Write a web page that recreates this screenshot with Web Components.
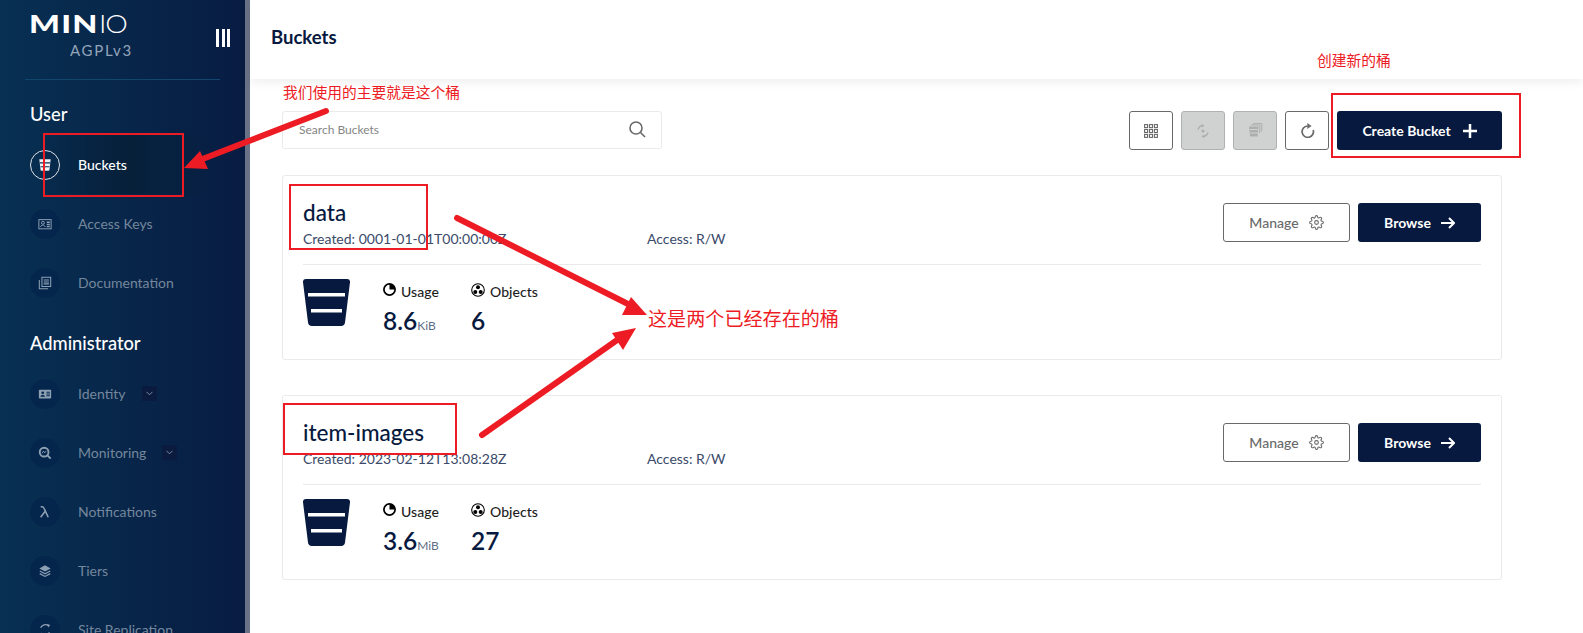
<!DOCTYPE html>
<html lang="zh">
<head>
<meta charset="utf-8">
<title>MinIO Buckets</title>
<style>
  html, body { margin: 0; height: 633px; overflow: hidden; background: #fff; }
  body { font-family: Lato, "Noto Sans CJK SC", sans-serif; color: #07193e; display: flex; position: relative; }
</style>
</head>
<body>
  <minio-sidebar>
    <nav-group label="User" first>
      <nav-item icon="bucket" active>Buckets</nav-item>
      <nav-item icon="keys">Access Keys</nav-item>
      <nav-item icon="docs">Documentation</nav-item>
    </nav-group>
    <nav-group label="Administrator">
      <nav-item icon="identity" caret>Identity</nav-item>
      <nav-item icon="monitor" caret>Monitoring</nav-item>
      <nav-item icon="lambda">Notifications</nav-item>
      <nav-item icon="tiers">Tiers</nav-item>
      <nav-item icon="sync">Site Replication</nav-item>
    </nav-group>
  </minio-sidebar>
  <main-area title="Buckets">
    <bucket-toolbar></bucket-toolbar>
    <bucket-card name="data" created="0001-01-01T00:00:00Z" size="8.6" unit="KiB" objects="6"></bucket-card>
    <bucket-card name="item-images" created="2023-02-12T13:08:28Z" size="3.6" unit="MiB" objects="27"></bucket-card>
  </main-area>
  <note-layer></note-layer>

<script>
const ICONS = {
  bucket: '<path fill="currentColor" d="M1.500 1.500h13l-1.400 12a1 1 0 0 1-1 1H3.900a1 1 0 0 1-1-1z"/><path stroke="#0a2f55" stroke-width="1.400" d="M2 5.500h12M3 10h10"/>',
  keys: '<rect x="1" y="3" width="14" height="10.500" fill="none" stroke="currentColor" stroke-width="1.100"/><circle cx="5.600" cy="6.600" r="1.700" fill="none" stroke="currentColor" stroke-width="1.100"/><path fill="none" stroke="currentColor" stroke-width="1.100" d="M3 11.500c0-3 5-3 5 0"/><path stroke="currentColor" stroke-width="1.600" d="M10 6h3.500M10 8.500h3.500M10 11h3.500"/>',
  docs: '<path fill="none" stroke="currentColor" stroke-width="1.200" d="M4.500 1.500h10v10.500h-10zM1.500 4.500v10h10"/><path stroke="currentColor" stroke-width="1.200" d="M6.500 4.500h6M6.500 6.800h6M6.500 9h6"/>',
  identity: '<rect x="1" y="3" width="14" height="10" rx="1" fill="currentColor"/><circle cx="5.400" cy="6.600" r="1.600" fill="#062a50"/><path fill="#062a50" d="M2.800 11.200c0-2.800 5.200-2.800 5.200 0z"/><path stroke="#062a50" stroke-width="1.100" d="M9.600 6h4M9.600 8h4M9.600 10h4"/>',
  monitor: '<circle cx="7" cy="7" r="5" fill="none" stroke="currentColor" stroke-width="2.200"/><path stroke="currentColor" stroke-width="2.200" d="M10.500 10.500l4 4"/><path fill="none" stroke="currentColor" d="M4.600 8.400l1.600-2.600 1.500 2 1.600-2"/>',
  lambda: '<path fill="none" stroke="currentColor" stroke-width="1.800" d="M3 2h1.800c1 0 1.500.5 1.900 1.400l5 10.600M8 7.500l-5 6.500"/>',
  tiers: '<path fill="currentColor" d="M8 1.500l6.500 3.500L8 8.500 1.500 5z"/><path fill="none" stroke="currentColor" stroke-width="1.400" d="M2 8l6 3.200L14 8M2 11l6 3.200 6-3.200"/>',
  sync: '<path fill="none" stroke="currentColor" stroke-width="1.500" d="M3 5.500A6 6 0 0 1 12 3M13 10.500A6 6 0 0 1 4 13"/><path fill="currentColor" d="M10.500 1l3.500 1.200-2.400 3zM5.500 15L2 13.800l2.400-3z"/>'
}

const TOOL_ICONS = {
  grid: '<g fill="none" stroke="currentColor" stroke-width="1.100"><rect x=".6" y=".6" width="3" height="3"/><rect x="5.500" y=".6" width="3" height="3"/><rect x="10.400" y=".6" width="3" height="3"/><rect x=".6" y="5.500" width="3" height="3"/><rect x="5.500" y="5.500" width="3" height="3"/><rect x="10.400" y="5.500" width="3" height="3"/><rect x=".6" y="10.400" width="3" height="3"/><rect x="5.500" y="10.400" width="3" height="3"/><rect x="10.400" y="10.400" width="3" height="3"/></g>',
  rewind: '<path fill="none" stroke="currentColor" stroke-width="1.500" d="M2 5.500A6 6 0 0 1 7 1.500M12 8.500A6 6 0 0 1 7 12.500"/><path fill="currentColor" d="M5.500 0l3 1.500-2.500 2zM8.500 14l-3-1.500 2.500-2z"/><circle cx="7" cy="7" r="1.600" fill="currentColor"/>',
  stack: '<path fill="currentColor" d="M1 3.500h9.500l-.9 10H2z"/><path fill="none" stroke="currentColor" d="M3 2h9l-.4 8M5 .6h9l-.4 8"/><path stroke="#d0d2d2" d="M1.500 6.500h8.500M2 10h8"/>',
  refresh: '<path fill="none" stroke="currentColor" stroke-width="1.600" d="M12.300 6.500A5.300 5.300 0 1 1 7 2.800"/><path fill="currentColor" d="M6.800 0l4 2.800-4 2.800z"/>'
}

class AppIcon extends HTMLElement {
  connectedCallback() {
    const size = this.getAttribute('size') || 16
    const box = this.getAttribute('box') || '0 0 16 16'
    const shapes = ICONS[this.getAttribute('name')] || TOOL_ICONS[this.getAttribute('name')] || ''
    this.attachShadow({ mode: 'open' }).innerHTML = `
      <style>:host { display: inline-flex; } svg { display: block; }</style>
      <svg width="${size}" height="${size}" viewBox="${box}">${shapes}</svg>`
  }
}
customElements.define('app-icon', AppIcon)

class MinioSidebar extends HTMLElement {
  constructor() {
    super()
    this.attachShadow({ mode: 'open' }).innerHTML = `
      <style>
        :host {
          display: flex; flex-direction: column; flex: none; box-sizing: border-box;
          width: 250px; height: 633px; overflow: hidden;
          border-right: 5px solid #6a7288;
          background: linear-gradient(90deg, #073052 0%, #081c42 100%);
          color: #fff;
        }
        .brand { flex: none; display: flex; height: 80px; box-sizing: border-box; margin: 0 25px; border-bottom: 1px solid #11466f; padding: 8px 0 0 4px; position: relative; }
        .logo { line-height: 30px; font-size: 25px; white-space: nowrap; display: flex; height: 30px; }
        .logo b { font-weight: 900; letter-spacing: 1px; transform: scaleX(1.3); transform-origin: left; width: 70px; }
        .logo i { font-style: normal; font-weight: 300; letter-spacing: -1px; transform: scaleX(1.14); transform-origin: left; }
        .lic { position: absolute; left: 45px; top: 41px; font-size: 15px; letter-spacing: 1.700px; color: #93a4b9; line-height: 18px; }
        .menu { position: absolute; left: 191px; top: 29px; display: flex; gap: 2.500px; }
        .menu span { width: 3px; height: 18px; background: #fff; }
      </style>
      <div class="brand">
        <div class="logo"><b>MIN</b><i>IO</i></div>
        <div class="lic">AGPLv3</div>
        <div class="menu"><span></span><span></span><span></span></div>
      </div>
      <slot></slot>`
  }
}
customElements.define('minio-sidebar', MinioSidebar)

class NavGroup extends HTMLElement {
  constructor() {
    super()
    this.attachShadow({ mode: 'open' }).innerHTML = `
      <style>
        :host { display: block; flex: none; }
        h3 { margin: 0; padding: 0 0 10.500px 30px; height: 52px; display: flex; align-items: flex-end; box-sizing: border-box; font-size: 18.300px; font-weight: 500; line-height: 22px; color: #fff; }
        :host([first]) h3 { height: 55px; }
      </style>
      <h3></h3>
      <slot></slot>`
    this.shadowRoot.querySelector('h3').textContent = this.getAttribute('label')
  }
}
customElements.define('nav-group', NavGroup)

class NavItem extends HTMLElement {
  connectedCallback() {
    const active = this.hasAttribute('active')
    this.attachShadow({ mode: 'open' }).innerHTML = `
      <style>
        :host { display: flex; align-items: center; height: 59px; padding-left: 30px; font-size: 14px; color: #74879c; }
        :host([active]) { color: #fff; font-weight: 500; background: linear-gradient(90deg, transparent 40px, #06203a 130px, transparent 215px); }
        .ic { width: 30px; height: 30px; flex: none; box-sizing: border-box; border-radius: 50%; background: #05264c; display: flex; align-items: center; justify-content: center; margin-right: 18px; color: #8d9fb3; }
        :host([active]) .ic { background: transparent; border: 1px solid #dfe3e8; color: #eef0f3; }
        .caret { width: 15px; height: 15px; margin-left: 16px; background: #0b1b40; display: flex; align-items: center; justify-content: center; }
        .caret svg { display: block; }
      </style>
      <span class="ic"><app-icon name="${this.getAttribute('icon')}" size="14"></app-icon></span>
      <slot></slot>
      ${this.hasAttribute('caret') ? '<span class="caret"><svg width="7" height="5" viewBox="0 0 7 5"><path d="M.5.8l3 3 3-3" fill="none" stroke="#8496aa" stroke-width=".9"/></svg></span>' : ''}`
  }
}
customElements.define('nav-item', NavItem)

class MainArea extends HTMLElement {
  connectedCallback() {
    this.attachShadow({ mode: 'open' }).innerHTML = `
      <style>
        :host { display: block; flex: 1; min-width: 0; }
        header { height: 79px; box-sizing: border-box; padding-left: 21px; display: flex; align-items: center; padding-bottom: 5px; font-size: 18.500px; font-weight: 700; color: #07193e; box-shadow: 0 3px 10px rgba(0,0,0,.07); }
        .body { padding: 32px 81px 0 32px; display: flex; flex-direction: column; gap: 35px; }
      </style>
      <header>${this.getAttribute('title')}</header>
      <div class="body"><slot></slot></div>`
  }
}
customElements.define('main-area', MainArea)

class ToolButton extends HTMLElement {
  connectedCallback() {
    this.attachShadow({ mode: 'open' }).innerHTML = `
      <style>
        :host { display: flex; align-items: center; justify-content: center; box-sizing: border-box; width: 44px; height: 39px; border: 1px solid #696969; border-radius: 3px; color: #696969; }
        :host([disabled]) { background: #d0d2d2; border-color: #b0b2b2; color: #adafaf; }
      </style>
      <slot></slot>`
  }
}
customElements.define('tool-button', ToolButton)

class ActionButton extends HTMLElement {
  connectedCallback() {
    this.attachShadow({ mode: 'open' }).innerHTML = `
      <style>
        :host { display: flex; align-items: center; justify-content: center; gap: 10px; box-sizing: border-box; height: 39px; border-radius: 3px; font-size: 14px; font-weight: 700; background: #07193e; color: #fff; }
        :host([outline]) { background: #fff; border: 1px solid #696969; color: #696969; font-weight: 500; }
        svg { display: block; }
      </style>
      <slot></slot><slot name="icon"></slot>`
  }
}
customElements.define('action-button', ActionButton)

class BucketToolbar extends HTMLElement {
  constructor() {
    super()
    this.attachShadow({ mode: 'open' }).innerHTML = `
      <style>
        :host { display: flex; align-items: flex-start; height: 39px; margin-bottom: -10px; }
        .search { width: 380px; height: 38px; box-sizing: border-box; border: 1px solid #eaeaea; border-radius: 3px; display: flex; align-items: center; justify-content: space-between; padding: 0 15px 2px 16px; font-size: 12px; color: #858585; }
        .tools { margin-left: auto; display: flex; gap: 8px; }
        action-button { width: 165px; margin-left: 0; gap: 12px; }
      </style>
      <div class="search">
        <span>Search Buckets</span>
        <svg width="17" height="17" viewBox="0 0 17 17"><circle cx="7" cy="7" r="6" fill="none" stroke="#696969" stroke-width="1.600"/><path d="M11.500 11.500l4.500 4.500" stroke="#696969" stroke-width="1.600"/></svg>
      </div>
      <div class="tools">
        <tool-button><app-icon name="grid" size="14" box="0 0 14 14"></app-icon></tool-button>
        <tool-button disabled><app-icon name="rewind" size="14" box="0 0 14 14"></app-icon></tool-button>
        <tool-button disabled><app-icon name="stack" size="15" box="0 0 15 15"></app-icon></tool-button>
        <tool-button><app-icon name="refresh" size="15" box="0 0 14 14"></app-icon></tool-button>
        <action-button>Create Bucket
          <svg slot="icon" width="14" height="14" viewBox="0 0 14 14"><path d="M7 0v14M0 7h14" stroke="#fff" stroke-width="2.500"/></svg>
        </action-button>
      </div>`
  }
}
customElements.define('bucket-toolbar', BucketToolbar)

class StatBlock extends HTMLElement {
  connectedCallback() {
    this.attachShadow({ mode: 'open' }).innerHTML = `
      <style>
        :host { display: block; padding-top: 3px; }
        .lab { display: flex; align-items: center; gap: 5px; height: 18px; font-size: 14px; color: #1d1d1d; font-weight: 500; letter-spacing: .05px; }
        .val { font-size: 24.500px; line-height: 34px; margin-top: 4px; font-weight: 600; color: #07193e; }
        small { font-size: 12px; font-weight: 400; color: #5e6c85; }
        ::slotted(svg) { display: block; margin-top: -3px; }
      </style>
      <div class="lab"><slot name="icon"></slot>${this.getAttribute('label')}</div>
      <div class="val">${this.getAttribute('value')}<small>${this.getAttribute('unit') || ''}</small></div>`
  }
}
customElements.define('stat-block', StatBlock)

class BucketCard extends HTMLElement {
  connectedCallback() {
    const a = n => this.getAttribute(n)
    this.attachShadow({ mode: 'open' }).innerHTML = `
      <style>
        :host { display: block; box-sizing: border-box; height: 185px; border: 1px solid #eaeaea; border-radius: 3px; padding: 0 20px; }
        .top { height: 89px; box-sizing: border-box; border-bottom: 1px solid #eaeaea; display: flex; justify-content: space-between; }
        h2 { margin: 0; padding-top: 23px; font-size: 22.500px; line-height: 28px; font-weight: 500; color: #07193e; }
        .meta { display: flex; margin-top: 3px; font-size: 14px; line-height: 18px; color: #3a4a69; }
        .meta span:first-child { width: 344px; }
        .acts { display: flex; gap: 8px; padding-top: 27px; }
        .manage { width: 127px; }
        .browse { width: 123px; }
        .stats { display: flex; padding-top: 14px; }
        .bk { display: block; margin-right: 33px; }
        stat-block { width: 88px; }
      </style>
      <div class="top">
        <div><h2>${a('name')}</h2>
          <div class="meta"><span>Created: ${a('created')}</span><span>Access: R/W</span></div>
        </div>
        <div class="acts">
          <action-button outline class="manage">Manage
            <svg slot="icon" width="15" height="15" viewBox="0 0 24 24" fill="none" stroke="#696969" stroke-width="1.700"><circle cx="12" cy="12" r="3"/><path d="M19.400 15a1.650 1.650 0 0 0 .33 1.820l.06.06a2 2 0 1 1-2.830 2.830l-.06-.06a1.650 1.650 0 0 0-2.820 1.170V21a2 2 0 0 1-4 0v-.09a1.650 1.650 0 0 0-2.830-1.170l-.06.06a2 2 0 1 1-2.830-2.830l.06-.06a1.650 1.650 0 0 0-1.170-2.820H3a2 2 0 0 1 0-4h.09a1.650 1.650 0 0 0 1.170-2.830l-.06-.06a2 2 0 1 1 2.830-2.830l.06.06a1.650 1.650 0 0 0 2.820-1.170V3a2 2 0 0 1 4 0v.09a1.650 1.650 0 0 0 2.830 1.170l.06-.06a2 2 0 1 1 2.830 2.830l-.06.06a1.650 1.650 0 0 0 1.170 2.820H21a2 2 0 0 1 0 4h-.09a1.650 1.650 0 0 0-1.510 1z"/></svg>
          </action-button>
          <action-button class="browse">Browse
            <svg slot="icon" width="14" height="12" viewBox="0 0 14 12" fill="none" stroke="#fff" stroke-width="2"><path d="M0 6h13M8 1l5 5-5 5"/></svg>
          </action-button>
        </div>
      </div>
      <div class="stats">
        <svg class="bk" width="47" height="47" viewBox="0 0 47 47"><path fill="#07193e" d="M3 0h41a3 3 0 0 1 3 3.300l-5 40.200a4 4 0 0 1-4 3.500H9a4 4 0 0 1-4-3.500L0 3.300A3 3 0 0 1 3 0z"/><path fill="#fff" d="M5 14h37v3.500H5zM8 30h31v3.500H8z"/></svg>
        <stat-block label="Usage" value="${a('size')}" unit="${a('unit')}">
          <svg slot="icon" width="13" height="13" viewBox="0 0 13 13"><circle cx="6.500" cy="6.500" r="5.600" fill="none" stroke="#000" stroke-width="1.700"/><path d="M6.500 6.500V.7a5.800 5.800 0 0 1 5.800 5.800z"/></svg>
        </stat-block>
        <stat-block label="Objects" value="${a('objects')}">
          <svg slot="icon" width="14" height="14" viewBox="0 0 14 14"><circle cx="7" cy="7" r="6.300" fill="none" stroke="#000" stroke-width="1.100"/><circle cx="7" cy="4.300" r="2"/><circle cx="4.300" cy="9" r="2"/><circle cx="9.700" cy="9" r="2"/></svg>
        </stat-block>
      </div>`
  }
}
customElements.define('bucket-card', BucketCard)

// red notes someone drew over the screenshot
class NoteLayer extends HTMLElement {
  constructor() {
    super()
    this.attachShadow({ mode: 'open' }).innerHTML = `
      <style>
        :host { position: absolute; inset: 0; pointer-events: none; font-family: "Noto Sans CJK SC", sans-serif; color: #ed1c24; }
        svg { position: absolute; left: 0; top: 0; }
        span { position: absolute; white-space: nowrap; line-height: 20px; font-size: 14.750px; }
        .big { font-size: 19.100px; line-height: 26px; }
      </style>
      <svg width="1583" height="633" fill="none" stroke="#ed1c24">
        <g stroke-width="2">
          <rect x="44" y="134" width="139" height="62"/>
          <rect x="1332" y="94" width="188" height="63"/>
          <rect x="290" y="185" width="137" height="64"/>
          <rect x="284" y="404" width="172" height="50"/>
        </g>
        <g stroke-width="6" stroke-linecap="round">
          <path d="M326 111L200 160"/>
          <path d="M457 218L632 306"/>
          <path d="M482 435L620 338"/>
        </g>
        <g fill="#ed1c24" stroke="none">
          <path d="M184 168L200 151 208 169z"/>
          <path d="M647 315L631 297 622 315z"/>
          <path d="M636 328L612 333 623 350z"/>
        </g>
      </svg>
      <span style="left:283px;top:82px">我们使用的主要就是这个桶</span>
      <span style="left:1317px;top:50px">创建新的桶</span>
      <span class="big" style="left:648px;top:305px">这是两个已经存在的桶</span>`
  }
}
customElements.define('note-layer', NoteLayer)
</script>
</body>
</html>
